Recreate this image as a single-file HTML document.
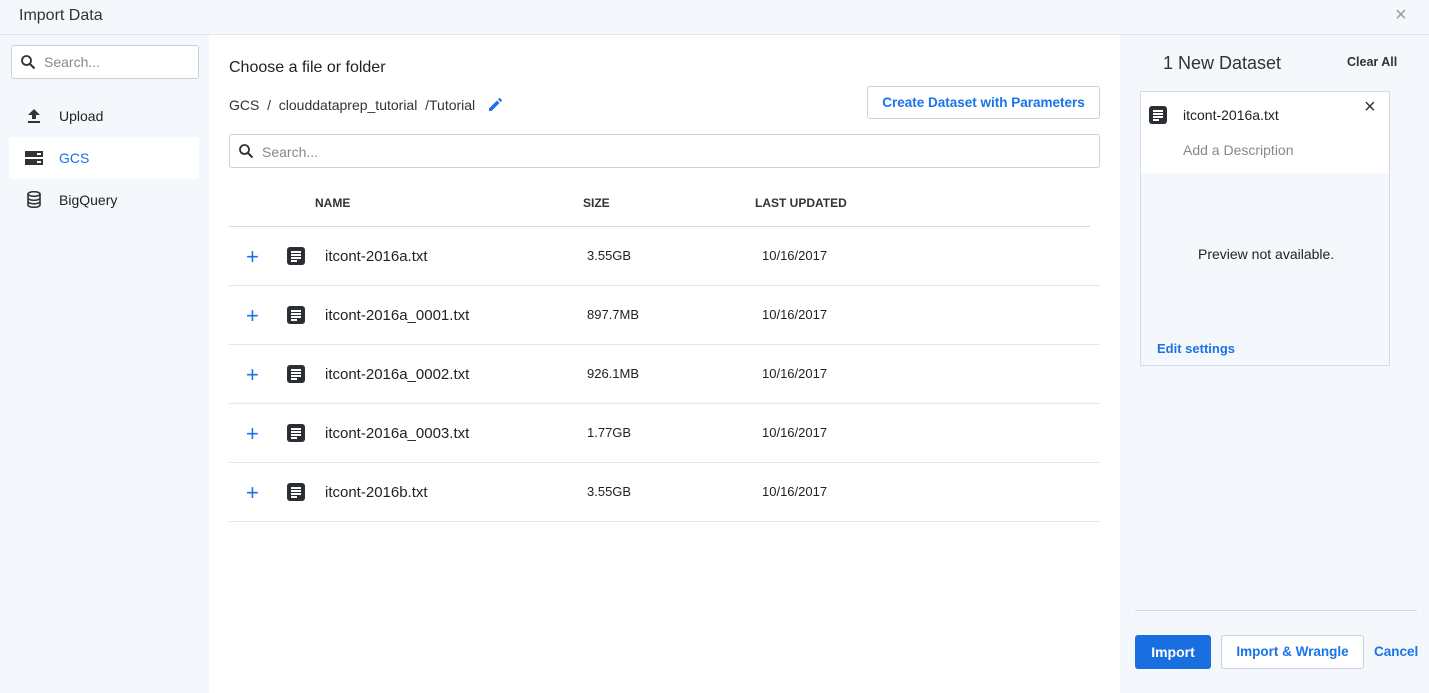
<!DOCTYPE html>
<html><head><style>
*{box-sizing:border-box;margin:0;padding:0}
body{width:1429px;height:693px;overflow:hidden;background:#f4f7fb;font-family:"Liberation Sans",sans-serif;color:#222;position:relative}
.a{position:absolute}
.hdr{left:0;top:0;width:1429px;height:35px;border-bottom:1px solid #e1e6ee;background:#f4f7fb}
.search{border:1px solid #c9d1dc;border-radius:3px;background:#fff;color:#888;font-size:14px}
.blue{color:#1a73e8}
.row{left:229px;width:871px;height:59px;border-bottom:1px solid #e3e6ea;font-size:14px}
.row span{position:absolute;top:21px}
.fi{position:absolute;width:18px;height:18px;background:#2b2f33;border-radius:3px}
.fi:after{content:"";position:absolute;left:4px;top:4px;width:10px;height:2px;background:#fff;box-shadow:0 3px 0 #fff,0 6px 0 #fff;}
.fi:before{content:"";position:absolute;left:4px;top:13px;width:6px;height:2px;background:#fff}
</style></head><body>
<div class="a hdr"></div>
<div class="a" style="left:19px;top:7px;font-size:16px;color:#333">Import Data</div>
<div class="a" style="left:1395px;top:4px;font-size:20px;color:#999">×</div>

<div class="a search" style="left:11px;top:45px;width:188px;height:34px;padding:8px 0 0 32px">Search...</div>
<svg class="a" style="left:20px;top:54px" width="16" height="16" viewBox="0 0 16 16"><circle cx="6.5" cy="6.5" r="4.5" fill="none" stroke="#333" stroke-width="1.8"/><path d="M10 10l4.5 4.5" stroke="#333" stroke-width="2"/></svg>

<svg class="a" style="left:27px;top:109px" width="14" height="14" viewBox="0 0 14 14"><path d="M7 0L1 6h4v4h4V6h4z M1 12h12v2H1z" fill="#333"/></svg>
<div class="a" style="left:59px;top:108px;font-size:14px">Upload</div>
<div class="a" style="left:9px;top:137px;width:190px;height:42px;background:#fff;border-radius:3px"></div>
<svg class="a" style="left:25px;top:151px" width="18" height="14" viewBox="0 0 18 14"><rect x="0" y="0" width="18" height="6" fill="#333"/><rect x="0" y="8" width="18" height="6" fill="#333"/><rect x="12" y="2" width="4" height="2" fill="#fff"/><rect x="12" y="10" width="4" height="2" fill="#fff"/></svg>
<div class="a blue" style="left:59px;top:150px;font-size:14px">GCS</div>
<svg class="a" style="left:27px;top:191px" width="14" height="17" viewBox="0 0 14 17"><ellipse cx="7" cy="3" rx="6" ry="2.3" fill="none" stroke="#333" stroke-width="1.6"/><path d="M1 3v11c0 1.3 2.7 2.3 6 2.3s6-1 6-2.3V3M1 7c0 1.3 2.7 2.3 6 2.3s6-1 6-2.3M1 10.5c0 1.3 2.7 2.3 6 2.3s6-1 6-2.3" fill="none" stroke="#333" stroke-width="1.6"/></svg>
<div class="a" style="left:59px;top:192px;font-size:14px">BigQuery</div>

<div class="a" style="left:209px;top:35px;width:911px;height:658px;background:#fff"></div>
<div class="a" style="left:229px;top:59px;font-size:16px">Choose a file or folder</div>
<div class="a" style="left:229px;top:97px;font-size:14px;color:#333">GCS &nbsp;/ &nbsp;clouddataprep_tutorial &nbsp;/Tutorial</div>
<svg class="a" style="left:487px;top:97px" width="16" height="16" viewBox="0 0 16 16"><path d="M2 11.5V14h2.5l8-8L10 3.5z M11 2.5l2.5 2.5 1.2-1.2c.3-.3.3-.8 0-1.1l-1.4-1.4c-.3-.3-.8-.3-1.1 0z" fill="#1a73e8"/></svg>
<div class="a blue" style="left:867px;top:86px;width:233px;height:33px;border:1px solid #c9d1dc;border-radius:3px;font-size:13.5px;font-weight:bold;text-align:center;line-height:31px">Create Dataset with Parameters</div>
<div class="a search" style="left:229px;top:134px;width:871px;height:34px;padding:9px 0 0 32px">Search...</div>
<svg class="a" style="left:238px;top:143px" width="16" height="16" viewBox="0 0 16 16"><circle cx="6.5" cy="6.5" r="4.5" fill="none" stroke="#333" stroke-width="1.8"/><path d="M10 10l4.5 4.5" stroke="#333" stroke-width="2"/></svg>

<div class="a" style="left:229px;top:195px;width:861px;height:32px;border-bottom:1px solid #d5d9de;font-size:12px;font-weight:bold;color:#333">
<span class="a" style="left:86px;top:1px">NAME</span><span class="a" style="left:354px;top:1px">SIZE</span><span class="a" style="left:526px;top:1px">LAST UPDATED</span></div>

<div class="a row" style="top:227px"><span style="left:17px;top:17px;font-size:22px;color:#1a73e8">+</span><i class="fi" style="left:58px;top:20px"></i><span style="left:96px;font-size:15px">itcont-2016a.txt</span><span style="left:358px;font-size:13px">3.55GB</span><span style="left:533px;font-size:13px">10/16/2017</span></div>
<div class="a row" style="top:286px"><span style="left:17px;top:17px;font-size:22px;color:#1a73e8">+</span><i class="fi" style="left:58px;top:20px"></i><span style="left:96px;font-size:15px">itcont-2016a_0001.txt</span><span style="left:358px;font-size:13px">897.7MB</span><span style="left:533px;font-size:13px">10/16/2017</span></div>
<div class="a row" style="top:345px"><span style="left:17px;top:17px;font-size:22px;color:#1a73e8">+</span><i class="fi" style="left:58px;top:20px"></i><span style="left:96px;font-size:15px">itcont-2016a_0002.txt</span><span style="left:358px;font-size:13px">926.1MB</span><span style="left:533px;font-size:13px">10/16/2017</span></div>
<div class="a row" style="top:404px"><span style="left:17px;top:17px;font-size:22px;color:#1a73e8">+</span><i class="fi" style="left:58px;top:20px"></i><span style="left:96px;font-size:15px">itcont-2016a_0003.txt</span><span style="left:358px;font-size:13px">1.77GB</span><span style="left:533px;font-size:13px">10/16/2017</span></div>
<div class="a row" style="top:463px"><span style="left:17px;top:17px;font-size:22px;color:#1a73e8">+</span><i class="fi" style="left:58px;top:20px"></i><span style="left:96px;font-size:15px">itcont-2016b.txt</span><span style="left:358px;font-size:13px">3.55GB</span><span style="left:533px;font-size:13px">10/16/2017</span></div>

<div class="a" style="left:1163px;top:53px;font-size:18px;color:#333">1 New Dataset</div>
<div class="a" style="left:1347px;top:55px;font-size:12.5px;font-weight:bold;color:#333">Clear All</div>
<div class="a" style="left:1140px;top:91px;width:250px;height:275px;border:1px solid #d5dbe3;background:#f4f7fb"></div>
<div class="a" style="left:1141px;top:92px;width:248px;height:81px;background:#fff"></div>
<i class="fi a" style="left:1149px;top:106px"></i>
<div class="a" style="left:1183px;top:107px;font-size:14px">itcont-2016a.txt</div>
<div class="a" style="left:1364px;top:96px;font-size:20px;color:#333">×</div>
<div class="a" style="left:1183px;top:142px;font-size:14px;color:#888">Add a Description</div>
<div class="a" style="left:1198px;top:246px;font-size:14px">Preview not available.</div>
<div class="a blue" style="left:1157px;top:341px;font-size:13px;font-weight:bold">Edit settings</div>
<div class="a" style="left:1135px;top:610px;width:282px;height:1px;background:#d5d9de"></div>
<div class="a" style="left:1135px;top:635px;width:76px;height:34px;background:#1a6fe0;border-radius:3px;color:#fff;font-size:14px;font-weight:bold;text-align:center;line-height:34px">Import</div>
<div class="a blue" style="left:1221px;top:635px;width:143px;height:34px;background:#fff;border:1px solid #c9d1dc;border-radius:3px;font-size:13.5px;font-weight:bold;text-align:center;line-height:32px">Import &amp; Wrangle</div>
<div class="a blue" style="left:1374px;top:644px;font-size:13.5px;font-weight:bold">Cancel</div>
</body></html>
